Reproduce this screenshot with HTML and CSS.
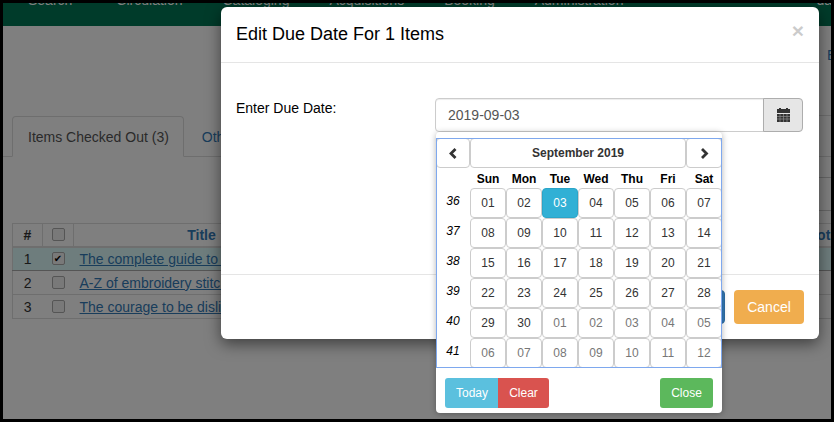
FILE: index.html
```html
<!DOCTYPE html>
<html lang="en">
<head>
  <meta charset="UTF-8" />
  <title>Edit Due Date</title>
  <link rel="stylesheet" href="styles.css">
</head>
<body>
  <div class="page">
    <nav class="nav">
      <a class="nav-item nav-first">Search<i class="caret"></i></a>
      <a class="nav-item">Circulation<i class="caret"></i></a>
      <a class="nav-item">Cataloging<i class="caret"></i></a>
      <a class="nav-item">Acquisitions<i class="caret"></i></a>
      <a class="nav-item">Booking<i class="caret"></i></a>
      <a class="nav-item">Administration<i class="caret"></i></a>
      <a class="nav-item nav-user">dana</a>
    </nav>

    <main class="main">
      <div class="toolbar"><a class="toolbar-link">Export</a></div>

      <div class="tabs">
        <a class="tab tab-active">Items Checked Out (3)</a>
        <a class="tab">Other Items</a>
      </div>

      <div class="filters">
        <div class="filter filter-wide"></div>
        <div class="filter"></div>
      </div>

      <table class="items">
        <colgroup>
          <col class="col-num"><col class="col-check"><col class="col-title"><col class="col-gap"><col class="col-opt">
        </colgroup>
        <thead>
          <tr>
            <th class="th-num">#</th>
            <th><input type="checkbox"></th>
            <th class="th-link">Title</th>
            <th class="th-link"></th>
            <th class="th-link th-opt">Notice</th>
          </tr>
        </thead>
        <tbody>
          <tr class="row-selected">
            <td class="td-num">1</td>
            <td class="td-check"><input type="checkbox" checked></td>
            <td colspan="3"><a href="#">The complete guide to needlework</a></td>
          </tr>
          <tr>
            <td class="td-num">2</td>
            <td class="td-check"><input type="checkbox"></td>
            <td colspan="3"><a href="#">A-Z of embroidery stitches</a></td>
          </tr>
          <tr>
            <td class="td-num">3</td>
            <td class="td-check"><input type="checkbox"></td>
            <td colspan="3"><a href="#">The courage to be disliked</a></td>
          </tr>
        </tbody>
      </table>
    </main>

    <div class="backdrop"></div>

    <section class="modal" aria-label="Edit due date">
      <header class="modal-header">
        <h4 class="modal-title">Edit Due Date For 1 Items</h4>
        <span class="close">×</span>
      </header>

      <div class="modal-body">
        <label class="due-label" for="dueDate">Enter Due Date:</label>
        <div class="input-group">
          <input class="due-input" id="dueDate" type="text" value="2019-09-03">
          <button class="addon" aria-label="Open calendar">
            <svg width="13" height="15" viewBox="0 0 13 15">
              <rect x="2" y="0" width="2" height="3" fill="#333"/>
              <rect x="9" y="0" width="2" height="3" fill="#333"/>
              <rect x="0" y="1" width="13" height="4" fill="#333"/>
              <rect x="0" y="6" width="13" height="8" fill="#333"/>
              <path d="M0 8.5h13M0 11h13M3 6v8M6.5 6v8M10 6v8" stroke="#8c8c8c" stroke-width=".7"/>
            </svg>
          </button>

          <div class="picker">
            <table class="calendar">
              <colgroup>
                <col class="cal-week"><col class="cal-day"><col class="cal-day"><col class="cal-day"><col class="cal-day"><col class="cal-day"><col class="cal-day"><col class="cal-day">
              </colgroup>
              <thead>
                <tr class="cal-head">
                  <th><button class="day">
                    <svg width="9" height="11" viewBox="0 0 9 11"><path d="M6.5 1 2 5.5 6.5 10" fill="none" stroke="#333" stroke-width="2.8"/></svg>
                  </button></th>
                  <th colspan="6"><button class="day month">September 2019</button></th>
                  <th><button class="day">
                    <svg width="9" height="11" viewBox="0 0 9 11"><path d="M2 1 6.5 5.5 2 10" fill="none" stroke="#333" stroke-width="2.8"/></svg>
                  </button></th>
                </tr>
                <tr class="cal-names">
                  <th></th><th>Sun</th><th>Mon</th><th>Tue</th><th>Wed</th><th>Thu</th><th>Fri</th><th>Sat</th>
                </tr>
              </thead>
              <tbody>
                <tr>
                  <td class="week">36</td>
                  <td><button class="day">01</button></td><td><button class="day">02</button></td><td><button class="day day-active">03</button></td><td><button class="day">04</button></td><td><button class="day">05</button></td><td><button class="day">06</button></td><td><button class="day">07</button></td>
                </tr>
                <tr>
                  <td class="week">37</td>
                  <td><button class="day">08</button></td><td><button class="day">09</button></td><td><button class="day">10</button></td><td><button class="day">11</button></td><td><button class="day">12</button></td><td><button class="day">13</button></td><td><button class="day">14</button></td>
                </tr>
                <tr>
                  <td class="week">38</td>
                  <td><button class="day">15</button></td><td><button class="day">16</button></td><td><button class="day">17</button></td><td><button class="day">18</button></td><td><button class="day">19</button></td><td><button class="day">20</button></td><td><button class="day">21</button></td>
                </tr>
                <tr>
                  <td class="week">39</td>
                  <td><button class="day">22</button></td><td><button class="day">23</button></td><td><button class="day">24</button></td><td><button class="day">25</button></td><td><button class="day">26</button></td><td><button class="day">27</button></td><td><button class="day">28</button></td>
                </tr>
                <tr>
                  <td class="week">40</td>
                  <td><button class="day">29</button></td><td><button class="day">30</button></td><td><button class="day muted">01</button></td><td><button class="day muted">02</button></td><td><button class="day muted">03</button></td><td><button class="day muted">04</button></td><td><button class="day muted">05</button></td>
                </tr>
                <tr>
                  <td class="week">41</td>
                  <td><button class="day muted">06</button></td><td><button class="day muted">07</button></td><td><button class="day muted">08</button></td><td><button class="day muted">09</button></td><td><button class="day muted">10</button></td><td><button class="day muted">11</button></td><td><button class="day muted">12</button></td>
                </tr>
              </tbody>
            </table>

            <div class="picker-footer">
              <div class="btn-group">
                <button class="btn-sm btn-today">Today</button>
                <button class="btn-sm btn-clear">Clear</button>
              </div>
              <button class="btn-sm btn-close">Close</button>
            </div>
          </div>
        </div>
      </div>

      <footer class="modal-footer">
        <button class="btn btn-primary">Update</button>
        <button class="btn btn-cancel">Cancel</button>
      </footer>
    </section>
  </div>
</body>
</html>
```

FILE: styles.css
```css
* {
  box-sizing: border-box;
}
html, body {
  margin: 0;
  height: 100%;
}
body {
  background: #000;
  font-family: "Liberation Sans", Arial, sans-serif;
  font-size: 14px;
  color: #333;
  overflow: hidden;
}
.page {
  position: relative;
  width: 828px;
  height: 416px;
  margin: 3px;
  background: #fff;
  overflow: hidden;
}

/* nav, mostly scrolled off the top */
.nav {
  display: flex;
  height: 23px;
  padding-left: 25px;
  background: #007654;
  color: #fff;
  white-space: nowrap;
}
.nav-item {
  display: block;
  height: 20px;
  margin-top: -13px;
  margin-right: 30px;
  line-height: 20px;
}
.nav-first {
  margin-right: 34px;
}
.nav-user {
  margin-left: 153px;
  margin-right: 0;
}
.caret {
  display: inline-block;
  margin-left: 4px;
  vertical-align: middle;
  border-top: 4px solid #fff;
  border-left: 3px solid transparent;
  border-right: 3px solid transparent;
}

/* page behind the dialog */
.main {
  width: 880px;
}
.toolbar {
  height: 90px;
  margin-left: 600px;
  padding: 21px 0 0 224px;
  border-bottom: 1px solid #ddd;
}
.toolbar-link {
  color: #337ab7;
}
.tabs {
  display: flex;
  height: 41px;
  padding-left: 9px;
  border-bottom: 1px solid #ddd;
}
.tab {
  display: block;
  height: 41px;
  padding: 10px 15px;
  margin-right: 2px;
  border: 1px solid transparent;
  color: #337ab7;
  line-height: 20px;
  white-space: nowrap;
}
.tab-active {
  padding-right: 14px;
  border-color: #ddd #ddd #fff;
  border-radius: 4px 4px 0 0;
  background: #fff;
  color: #555;
}
.filters {
  display: flex;
  height: 34px;
  margin: 20px 0 0 600px;
}
.filter {
  width: 120px;
  border: 1px solid #ccc;
}
.filter-wide {
  width: 218px;
  border-right: 0;
}
.items {
  width: 870px;
  margin: 12px 0 0 9px;
  table-layout: fixed;
  border-collapse: collapse;
  border: 1px solid #ddd;
}
.col-num { width: 30px; }
.col-check { width: 31px; }
.col-title { width: 256px; }
.col-gap { width: 461px; }
.items th {
  height: 23px;
  padding: 0 5px;
  border: 1px solid #ddd;
  border-bottom-width: 2px;
  text-align: center;
}
.th-link {
  color: #337ab7;
}
.items .th-opt {
  text-align: left;
  padding-left: 16px;
}
.items td {
  height: 24px;
  padding: 0 6px;
  border-top: 1px solid #ddd;
}
.items .td-num, .items .td-check {
  text-align: center;
  padding: 0;
}
.items input {
  appearance: none;
  display: block;
  width: 13px;
  height: 13px;
  margin: 0 auto;
  border: 1px solid #aaa;
  border-radius: 2px;
  background: #f2f2f2;
  text-align: center;
}
.items input:checked::after {
  content: "✔";
  display: block;
  font-family: "DejaVu Sans", sans-serif;
  font-size: 10px;
  line-height: 11px;
  color: #000;
}
.items a {
  color: #337ab7;
}
.row-selected {
  background: #dcfbfb;
}
.items .row-selected td {
  border-bottom: 1px solid #aaa;
}
.backdrop {
  position: absolute;
  inset: 0;
  background: rgba(0, 0, 0, 0.5);
}

/* dialog */
.modal {
  position: absolute;
  left: 218px;
  top: 4px;
  width: 598px;
  height: 332px;
  background: #fff;
  border-radius: 6px;
  box-shadow: 0 5px 15px rgba(0, 0, 0, 0.5);
  color: #000;
}
.modal-header {
  display: flex;
  justify-content: space-between;
  height: 56px;
  padding: 15px;
  border-bottom: 1px solid #e5e5e5;
}
.modal-title {
  margin: 0;
  font-size: 18px;
  font-weight: 400;
  line-height: 25px;
}
.close {
  margin-top: -2px;
  font-size: 21px;
  font-weight: 700;
  line-height: 21px;
  color: #000;
  opacity: 0.2;
}
.modal-body {
  display: flex;
  height: 211px;
  padding: 35px 15px 0;
}
.due-label {
  width: 199px;
  line-height: 20px;
}
.input-group {
  position: relative;
  display: flex;
  width: 368px;
  height: 34px;
}
.due-input {
  flex: 1;
  min-width: 0;
  padding: 6px 12px;
  border: 1px solid #ccc;
  border-radius: 4px 0 0 4px;
  font: inherit;
  color: #555;
  box-shadow: inset 0 1px 1px rgba(0, 0, 0, 0.075);
}
.addon {
  width: 40px;
  padding: 0;
  margin-left: -1px;
  border: 1px solid #adadad;
  border-radius: 0 4px 4px 0;
  background: #e6e6e6;
}
.addon svg {
  display: block;
  margin: 1px auto 0;
}

/* date picker dropdown */
.picker {
  position: absolute;
  left: 1px;
  top: 34px;
  width: 286px;
  height: 281px;
  padding-top: 6px;
  background: #fff;
  border-radius: 4px;
  box-shadow: 0 1px 6px rgba(0, 0, 0, 0.3);
}
.calendar {
  width: 286px;
  table-layout: fixed;
  border-collapse: separate;
  border-spacing: 0;
  outline: 1px solid #7ea8ee;
  outline-offset: -1px;
}
.cal-week { width: 34px; }
.cal-day { width: 36px; }
.calendar th, .calendar td {
  padding: 0;
  font-size: 12px;
  text-align: center;
}
.cal-names th {
  height: 20px;
  padding-top: 2px;
  color: #000;
  font-weight: 700;
}
.calendar .week {
  padding-bottom: 4px;
  font-style: italic;
  color: #000;
}
.day {
  display: block;
  width: 100%;
  height: 30px;
  padding: 0;
  border: 1px solid #ccc;
  border-radius: 4px;
  background: #fff;
  font: inherit;
  color: #333;
}
.day svg {
  display: block;
  margin: 0 auto;
}
.month {
  font-weight: 700;
}
.muted {
  color: #777;
}
.day-active {
  background: #31b0d5;
  border-color: #2ba5c8;
  color: #fff;
}
.picker-footer {
  display: flex;
  justify-content: space-between;
  padding: 10px 9px 0;
}
.btn-group {
  display: flex;
}
.btn-sm {
  height: 30px;
  padding: 0 10px;
  border: 1px solid transparent;
  border-radius: 3px;
  font: inherit;
  font-size: 12px;
  color: #fff;
}
.btn-today {
  width: 53px;
  background: #5bc0de;
  border-radius: 3px 0 0 3px;
}
.btn-clear {
  width: 51px;
  background: #d9534f;
  border-radius: 0 3px 3px 0;
}
.btn-close {
  width: 53px;
  background: #5cb85c;
}

.modal-footer {
  display: flex;
  justify-content: flex-end;
  gap: 9px;
  height: 65px;
  padding: 15px;
  border-top: 1px solid #e5e5e5;
}
.btn {
  height: 34px;
  padding: 6px 12px;
  border: 1px solid transparent;
  border-radius: 4px;
  font: inherit;
  color: #fff;
}
.btn-primary {
  background: #337ab7;
  border-color: #2e6da4;
}
.btn-cancel {
  width: 70px;
  background: #f0ad4e;
}
```
